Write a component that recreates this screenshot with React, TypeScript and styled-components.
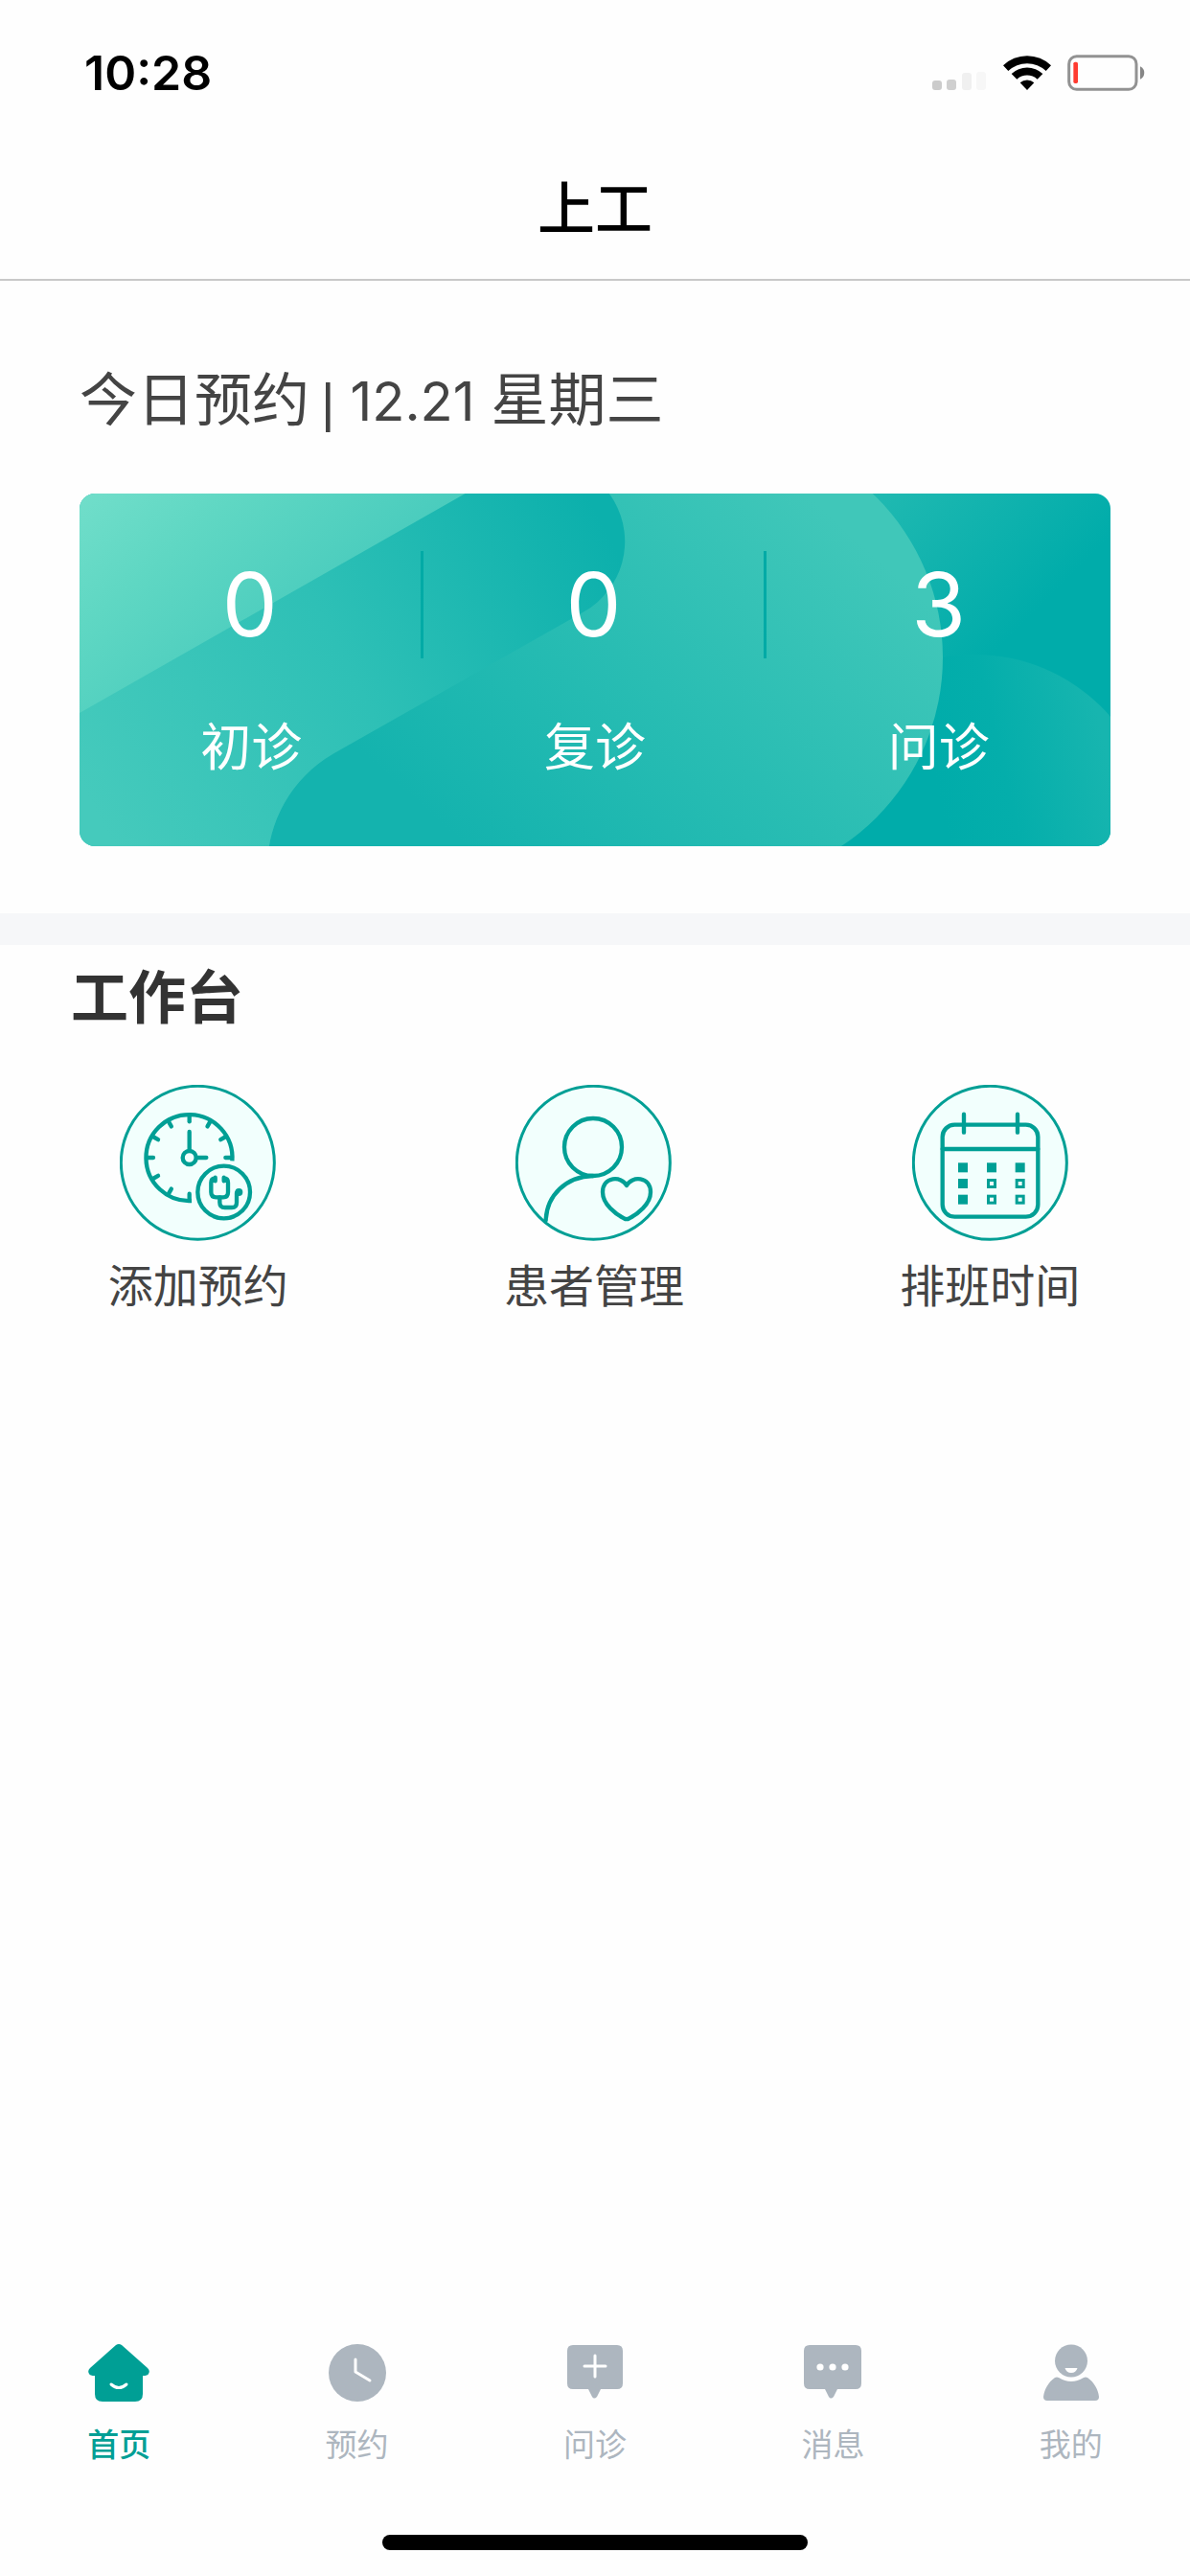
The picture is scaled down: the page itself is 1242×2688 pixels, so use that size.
import React from "react";
import styled, { createGlobalStyle } from "styled-components";

const TEAL = "#009f95";
const GREY = "#adb6bf";

const GlobalStyle = createGlobalStyle`
  *, *::before, *::after { box-sizing: border-box; }
  body {
    margin: 0;
    background: #fefefe;
    font-family: Inter, "Noto Sans CJK SC", sans-serif;
    color: #444;
  }
  svg { display: block; }
  h1, h2, p, dl, dt, dd { margin: 0; }
`;

const Page = styled.div`
  display: flex;
  flex-direction: column;
  min-height: 100vh;
`;

const StatusBar = styled.div`
  display: flex;
  align-items: center;
  justify-content: space-between;
  padding: 40px 46px 30px 88px;
`;

const Clock = styled.time`
  font-size: 50px;
  line-height: 72px;
  font-weight: 600;
  color: #000;
`;

const StatusIcons = styled.div`
  display: flex;
  align-items: center;
  gap: 17px;
`;

const TitleBar = styled.header`
  display: flex;
  justify-content: center;
  padding: 34px 0 31px;
  border-bottom: 2px solid #c8c8c8;
`;

const Title = styled.h1`
  font-size: 60px;
  line-height: 84px;
  font-weight: 500;
  color: #000;
`;

const Main = styled.main`
  flex: 1;
`;

const Today = styled.section`
  padding: 82px 83px 70px;
  border-bottom: 33px solid #f6f7f9;
`;

const TodayHeading = styled.h2`
  font-size: 60px;
  line-height: 84px;
  font-weight: 400;
`;

const Bar = styled.span`
  margin: 0 16px 0 12px;
  font-family: "Liberation Sans", sans-serif;
  font-size: 56px;
  line-height: 1;
`;

const DateText = styled.span`
  font-size: 56px;
  line-height: 1;
`;

const Card = styled.div`
  position: relative;
  margin-top: 56px;
  padding: 60px 0 71px;
  border-radius: 16px;
  overflow: hidden;
  color: #fff;
`;

const CardArt = styled.svg`
  position: absolute;
  inset: 0;
  width: 100%;
  height: 100%;
`;

const Stats = styled.dl`
  position: relative;
  display: grid;
  grid-template-columns: repeat(3, 1fr);
`;

const Stat = styled.div`
  display: flex;
  flex-direction: column-reverse;
  gap: 61px;
  text-align: center;
`;

const StatValue = styled.dd<{ $divided: boolean }>`
  font-size: 92px;
  line-height: 112px;
  border-right: ${(p) => (p.$divided ? "3px solid #00aaa6" : "none")};
`;

const StatLabel = styled.dt`
  font-size: 53px;
  line-height: 64px;
`;

const Workbench = styled.section`
  padding-top: 13px;
`;

const WorkbenchHeading = styled.h2`
  padding-left: 74px;
  font-size: 60px;
  line-height: 84px;
  font-weight: 700;
  color: #333;
`;

const Actions = styled.div`
  display: grid;
  grid-template-columns: repeat(3, 1fr);
  margin-top: 49px;
  padding-right: 2px;
`;

const Action = styled.button`
  display: flex;
  flex-direction: column;
  align-items: center;
  gap: 15px;
  padding: 0;
  border: 0;
  background: none;
  font: inherit;
  font-size: 47px;
  line-height: 64px;
  color: inherit;
`;

const TabBar = styled.nav`
  display: grid;
  grid-template-columns: repeat(5, 1fr);
`;

const Tab = styled.a<{ $active?: boolean }>`
  display: flex;
  flex-direction: column;
  align-items: center;
  gap: 23px;
  font-size: 33px;
  line-height: 44px;
  font-weight: ${(p) => (p.$active ? 500 : 400)};
  color: ${(p) => (p.$active ? TEAL : GREY)};
  text-decoration: none;
`;

const HomeIndicator = styled.div`
  width: 444px;
  height: 16px;
  margin: 72px auto 27px;
  border-radius: 8px;
  background: #000;
`;

function SignalIcon() {
  return (
    <svg width="57" height="38" viewBox="0 0 57 38" aria-hidden="true">
      <rect x="0" y="27" width="10" height="10" rx="3" fill="#cbcbcb" />
      <rect x="15" y="26" width="10" height="11" rx="3" fill="#cfcfcf" />
      <rect x="31" y="19" width="10" height="18" rx="3" fill="#f0f0f0" />
      <rect x="46" y="18" width="10" height="19" rx="3" fill="#f7f7f7" />
    </svg>
  );
}

function WifiIcon() {
  return (
    <svg width="50" height="38" viewBox="0 0 150 114" aria-hidden="true">
      <path d="M0 34 A108 108 0 0 1 150 34 L134 51 A86 86 0 0 0 16 51 Z" />
      <path d="M26 60 A71 71 0 0 1 124 60 L107 77 A48 48 0 0 0 43 77 Z" />
      <path d="M53 88 A33 33 0 0 1 97 88 L75 111 Z" />
    </svg>
  );
}

function BatteryIcon() {
  return (
    <svg width="82" height="38" viewBox="0 0 246 114" aria-hidden="true">
      <rect x="5" y="5" width="211" height="104" rx="24" fill="none" stroke="#929292" strokeWidth="9" />
      <rect x="19" y="23" width="14" height="67" rx="5" fill="#ff3b30" />
      <path d="M228 37 A22 22 0 0 1 228 77 Z" fill="#868686" />
    </svg>
  );
}

function CardBackground() {
  return (
    <CardArt viewBox="0 0 1076 368" preserveAspectRatio="none" aria-hidden="true">
      <defs>
        <linearGradient id="glow" gradientUnits="userSpaceOnUse" x1="0" y1="0" x2="172" y2="206">
          <stop offset="0" stopColor="#71deca" />
          <stop offset="0.4" stopColor="#5fd7c3" />
          <stop offset="1" stopColor="#48cbbd" />
        </linearGradient>
        <linearGradient id="base" gradientUnits="userSpaceOnUse" x1="800" y1="0" x2="960" y2="160">
          <stop offset="0" stopColor="#23bbb2" />
          <stop offset="0.5" stopColor="#12b3ae" />
          <stop offset="1" stopColor="#00acaa" />
        </linearGradient>
        <linearGradient id="band" gradientUnits="userSpaceOnUse" x1="0" y1="300" x2="540" y2="20">
          <stop offset="0" stopColor="#45cabc" />
          <stop offset="0.5" stopColor="#2ec0b6" />
          <stop offset="1" stopColor="#0cb0ac" />
        </linearGradient>
        <linearGradient id="bubble" gradientUnits="userSpaceOnUse" x1="440" y1="400" x2="780" y2="20">
          <stop offset="0" stopColor="#14b3ae" />
          <stop offset="0.5" stopColor="#29bdb3" />
          <stop offset="1" stopColor="#40c7b9" />
        </linearGradient>
        <linearGradient id="corner" gradientUnits="userSpaceOnUse" x1="900" y1="330" x2="1076" y2="290">
          <stop offset="0" stopColor="#00acaa" />
          <stop offset="0.4" stopColor="#04aeab" />
          <stop offset="1" stopColor="#17b5af" />
        </linearGradient>
      </defs>
      <rect width="1076" height="368" fill="url(#base)" />
      <circle cx="934" cy="356" r="188" fill="url(#corner)" />
      <path
        d="M443 -23 L665 -65 A236 236 0 0 1 665 407 L196 407 V391 A137 137 0 0 1 264 272 L400 100 Z"
        fill="url(#bubble)"
      />
      <path d="M0 0 H440 V60 L0 300 Z" fill="url(#glow)" />
      <path
        d="M0 229 L443 -23 A84 84 0 0 1 527 123 L264 272 A137 137 0 0 0 196 391 L0 391 Z"
        fill="url(#band)"
      />
    </CardArt>
  );
}

function Badge({ children }: { children: React.ReactNode }) {
  return (
    <svg
      width="163"
      height="163"
      viewBox="0 0 489 489"
      fill="none"
      stroke={TEAL}
      strokeWidth="13"
      strokeLinecap="round"
      strokeLinejoin="round"
      aria-hidden="true"
    >
      <circle cx="244" cy="244" r="240" fill="#f2fffd" strokeWidth="9" />
      {children}
    </svg>
  );
}

function AddAppointmentIcon() {
  const ticks = [0, 30, 60, 90, 180, 210, 240, 270, 300, 330];
  return (
    <Badge>
      <path d="M352 238 A135 135 0 1 0 225 363" strokeLinecap="butt" />
      {ticks.map((a) => (
        <path key={a} d="M218 96 V115" transform={`rotate(${a} 218 228)`} />
      ))}
      <circle cx="218" cy="228" r="21" />
      <path d="M218 205 V147 M241 228 H271" />
      <circle cx="326" cy="336" r="82" />
      <path d="M299 292 Q286 292 286 306 V336 Q286 352 302 352 H324 Q339 352 339 336 V306 Q339 292 326 292 M299 290 V301 M326 290 V301" />
      <path d="M313 352 V368 Q313 384 329 384 H351 Q366 384 366 368 V338" />
      <circle cx="373" cy="336" r="12" fill={TEAL} stroke="none" />
    </Badge>
  );
}

function PatientsIcon() {
  return (
    <Badge>
      <circle cx="243" cy="195" r="90" />
      <path d="M243 285 C158 287 98 346 95 424" />
      <path d="M348 315 C332 284 273 286 273 336 C273 374 314 405 340 418 Q348 423 356 418 C382 405 423 374 423 336 C423 286 364 284 348 315 Z" />
    </Badge>
  );
}

function ScheduleIcon() {
  const rows = [244, 294, 344];
  const cols = [144, 234, 323];
  return (
    <Badge>
      <rect x="95" y="125" width="299" height="288" rx="38" />
      <path d="M95 201 H394 M162 92 V149 M330 92 V149" />
      {rows.map((y, r) =>
        cols.map((x, c) => (
          <g key={`${x}-${y}`} stroke="none">
            <rect x={x} y={y} width="30" height="30" fill={TEAL} />
            {r > 0 && c > 0 && <rect x={x + 9} y={y + 9} width="12" height="12" fill="#f2fffd" />}
          </g>
        ))
      )}
    </Badge>
  );
}

function HomeIcon() {
  return (
    <svg width="64" height="60" viewBox="0 0 64 60" aria-hidden="true">
      <path
        fill="currentColor"
        d="M29 1 Q32 -1 35 1 L62 25 Q65 28 63 31 Q62 33 57 33 V52 Q57 60 49 60 H15 Q7 60 7 52 V33 Q2 33 1 31 Q-1 28 2 25 Z"
      />
      <path d="M24 42 Q32 49 40 42" fill="none" stroke="#fff" strokeWidth="3" strokeLinecap="round" />
    </svg>
  );
}

function ClockIcon() {
  return (
    <svg width="60" height="60" viewBox="0 0 60 60" aria-hidden="true">
      <circle cx="30" cy="30" r="30" fill="currentColor" />
      <path d="M28 16 V29 L43 38" fill="none" stroke="#fff" strokeWidth="3" strokeLinecap="round" strokeLinejoin="round" />
    </svg>
  );
}

function ConsultIcon() {
  return (
    <svg width="58" height="60" viewBox="0 0 58 60" aria-hidden="true">
      <path
        fill="currentColor"
        d="M6 1 H52 Q58 1 58 7 V41 Q58 47 52 47 H35 L31 55 Q28 58 26 55 L22 47 H6 Q0 47 0 41 V7 Q0 1 6 1 Z"
      />
      <path d="M18 23 H40 M29 12 V34" stroke="#fff" strokeWidth="3" strokeLinecap="round" />
    </svg>
  );
}

function MessageIcon() {
  return (
    <svg width="60" height="60" viewBox="0 0 60 60" aria-hidden="true">
      <path
        fill="currentColor"
        d="M6 1 H54 Q60 1 60 7 V41 Q60 47 54 47 H35 L31 55 Q28 58 26 55 L22 47 H6 Q0 47 0 41 V7 Q0 1 6 1 Z"
      />
      <g fill="#fff">
        <circle cx="17" cy="24" r="3.6" />
        <circle cx="30" cy="24" r="3.6" />
        <circle cx="43" cy="24" r="3.6" />
      </g>
    </svg>
  );
}

function ProfileIcon() {
  return (
    <svg width="58" height="60" viewBox="0 0 58 60" aria-hidden="true">
      <circle cx="29" cy="17.5" r="17" fill="currentColor" />
      <path d="M22.5 25 H35.5 Q34 30 29 30 Q24 30 22.5 25 Z" fill="#fff" />
      <path
        fill="currentColor"
        d="M12 35 Q14 34 16 35 Q29 43 42 35 Q44 34 46 35 C53 40 57 47 58 55 Q58 59 54 59 H4 Q0 59 0 55 C1 47 5 40 12 35 Z"
      />
    </svg>
  );
}

const stats = [
  { label: "初诊", value: 0 },
  { label: "复诊", value: 0 },
  { label: "问诊", value: 3 },
];

const actions = [
  { label: "添加预约", Icon: AddAppointmentIcon },
  { label: "患者管理", Icon: PatientsIcon },
  { label: "排班时间", Icon: ScheduleIcon },
];

const tabs = [
  { label: "首页", Icon: HomeIcon },
  { label: "预约", Icon: ClockIcon },
  { label: "问诊", Icon: ConsultIcon },
  { label: "消息", Icon: MessageIcon },
  { label: "我的", Icon: ProfileIcon },
];

export default function App() {
  return (
    <Page lang="zh-CN">
      <GlobalStyle />
      <StatusBar>
        <Clock>10:28</Clock>
        <StatusIcons>
          <SignalIcon />
          <WifiIcon />
          <BatteryIcon />
        </StatusIcons>
      </StatusBar>
      <TitleBar>
        <Title>上工</Title>
      </TitleBar>
      <Main>
        <Today>
          <TodayHeading>
            今日预约<Bar>|</Bar>
            <DateText>12.21</DateText> 星期三
          </TodayHeading>
          <Card>
            <CardBackground />
            <Stats>
              {stats.map(({ label, value }, i) => (
                <Stat key={label}>
                  <StatLabel>{label}</StatLabel>
                  <StatValue $divided={i < stats.length - 1}>{value}</StatValue>
                </Stat>
              ))}
            </Stats>
          </Card>
        </Today>
        <Workbench>
          <WorkbenchHeading>工作台</WorkbenchHeading>
          <Actions>
            {actions.map(({ label, Icon }) => (
              <Action key={label} type="button">
                <Icon />
                {label}
              </Action>
            ))}
          </Actions>
        </Workbench>
      </Main>
      <TabBar>
        {tabs.map(({ label, Icon }, i) => (
          <Tab key={label} href="#" $active={i === 0}>
            <Icon />
            {label}
          </Tab>
        ))}
      </TabBar>
      <HomeIndicator />
    </Page>
  );
}
